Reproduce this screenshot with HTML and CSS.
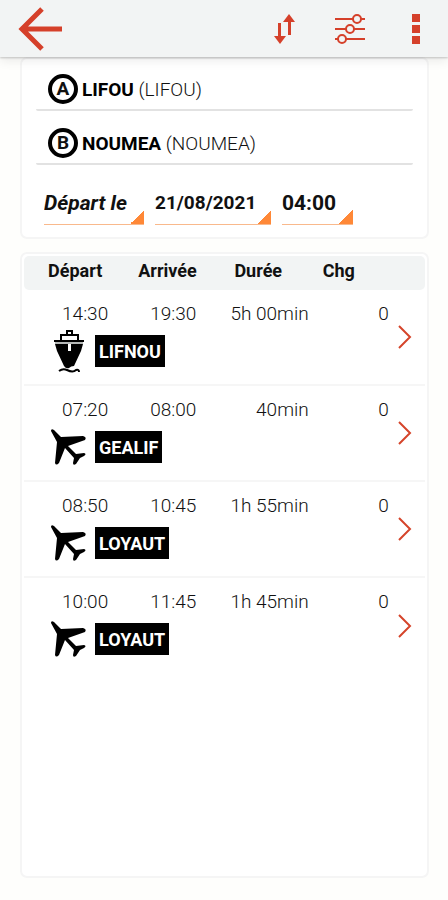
FILE: index.html
```html
<!DOCTYPE html>
<html lang="fr">
<head>
    <meta charset="UTF-8">
    <meta name="viewport" content="width=device-width, initial-scale=1.0">
    <title>Itinéraires</title>
    <link rel="stylesheet" href="styles.css">
</head>
<body>

    <svg class="sprite" aria-hidden="true">
        <symbol id="plane" viewBox="0 0 38 38">
            <path d="M1 3 Q1 0 4 2 L11 9 L33 8 Q37 9 35 12 L18 18 L26 26 L34 25 Q37 26 34 28 L30 30 L26 36 Q23 38 23 35 L24 30 L15 20 L9 35 Q6 38 5 35 L7 14 Z"/>
        </symbol>
        <symbol id="boat" viewBox="0 0 32 44">
            <path d="M14 5 V2 H19 V5 M8 11 V6 H25 V11" fill="none" stroke="#000" stroke-width="2"/>
            <path d="M1 11 H31 V13 H1 Z"/>
            <path d="M2 13 H30 V15 H2 Z" fill="#b5b8b7"/>
            <path d="M2 15 H15 V22 H18 V15 H30 L28 22 L21 37 Q18 37 16 39 Q13 40 11 37 L4 22 Z"/>
            <path d="M6 42 Q10 39 14 41 Q20 44 23 41 Q26 40 26 43" fill="none" stroke="#000" stroke-width="2"/>
        </symbol>
        <symbol id="chevron" viewBox="0 0 16 26">
            <path d="M2 2 L13 13 L2 24" fill="none" stroke="#d5442a" stroke-width="2"/>
        </symbol>
    </svg>

    <header class="topbar">
        <button type="button" class="icon-button back" aria-label="Retour">
            <svg width="46" height="46" viewBox="0 0 46 46" fill="none" stroke="#d5402a" stroke-width="5">
                <path d="M24 3 L4 23 L24 43 M4 23 H44"/>
            </svg>
        </button>
        <button type="button" class="icon-button" aria-label="Inverser">
            <svg width="24" height="32" viewBox="0 0 24 32" fill="#d5402a">
                <path d="M17 1 L23 9 H19 V22 H16 V9 H11 Z"/>
                <path d="M6 10 H9 V23 H14 L8 31 L2 23 H6 Z"/>
            </svg>
        </button>
        <button type="button" class="icon-button" aria-label="Options">
            <svg width="32" height="32" viewBox="0 0 32 32" fill="#f2f4f4" stroke="#d5402a" stroke-width="2">
                <path d="M1 6 H31 M1 16 H31 M1 26 H31"/>
                <circle cx="23" cy="6" r="4"/>
                <circle cx="16" cy="16" r="4"/>
                <circle cx="8" cy="26" r="4"/>
            </svg>
        </button>
        <button type="button" class="icon-button" aria-label="Menu">
            <svg width="8" height="32" viewBox="0 0 8 32" fill="#d5402a">
                <path d="M0 1 H8 V9 H0 Z M0 12 H8 V20 H0 Z M0 23 H8 V31 H0 Z"/>
            </svg>
        </button>
    </header>

    <form class="card search">
        <button type="button" class="place">
            <span class="pin">A</span>
            <span><b>LIFOU</b> (LIFOU)</span>
        </button>
        <button type="button" class="place">
            <span class="pin">B</span>
            <span><b>NOUMEA</b> (NOUMEA)</span>
        </button>
        <div class="when">
            <select class="picker mode" aria-label="Type d'horaire">
                <option>Départ le</option>
            </select>
            <input class="picker date" type="text" value="21/08/2021" aria-label="Date">
            <input class="picker time" type="text" value="04:00" aria-label="Heure">
        </div>
    </form>

    <main class="card results">
        <table class="journeys">
            <colgroup>
                <col class="col-dep">
                <col class="col-arr">
                <col class="col-dur">
                <col class="col-chg">
                <col class="col-more">
            </colgroup>
            <thead>
                <tr>
                    <th class="th-dep">Départ</th>
                    <th class="th-arr">Arrivée</th>
                    <th class="th-dur">Durée</th>
                    <th class="th-chg">Chg</th>
                    <td></td>
                </tr>
            </thead>
            <tbody>
                <tr class="times">
                    <td>14:30</td>
                    <td>19:30</td>
                    <td>5h 00min</td>
                    <td>0</td>
                    <td class="more" rowspan="2"><a href="#" aria-label="Détail"><svg width="16" height="26"><use href="#chevron"/></svg></a></td>
                </tr>
                <tr class="lines">
                    <td colspan="4">
                        <div class="line"><span class="vehicle"><svg width="32" height="44"><use href="#boat"/></svg></span><span class="badge">LIFNOU</span></div>
                    </td>
                </tr>
            </tbody>
            <tbody>
                <tr class="times">
                    <td>07:20</td>
                    <td>08:00</td>
                    <td>40min</td>
                    <td>0</td>
                    <td class="more" rowspan="2"><a href="#" aria-label="Détail"><svg width="16" height="26"><use href="#chevron"/></svg></a></td>
                </tr>
                <tr class="lines">
                    <td colspan="4">
                        <div class="line"><span class="vehicle"><svg width="38" height="38"><use href="#plane"/></svg></span><span class="badge">GEALIF</span></div>
                    </td>
                </tr>
            </tbody>
            <tbody>
                <tr class="times">
                    <td>08:50</td>
                    <td>10:45</td>
                    <td>1h 55min</td>
                    <td>0</td>
                    <td class="more" rowspan="2"><a href="#" aria-label="Détail"><svg width="16" height="26"><use href="#chevron"/></svg></a></td>
                </tr>
                <tr class="lines">
                    <td colspan="4">
                        <div class="line"><span class="vehicle"><svg width="38" height="38"><use href="#plane"/></svg></span><span class="badge">LOYAUT</span></div>
                    </td>
                </tr>
            </tbody>
            <tbody>
                <tr class="times">
                    <td>10:00</td>
                    <td>11:45</td>
                    <td>1h 45min</td>
                    <td>0</td>
                    <td class="more" rowspan="2"><a href="#" aria-label="Détail"><svg width="16" height="26"><use href="#chevron"/></svg></a></td>
                </tr>
                <tr class="lines">
                    <td colspan="4">
                        <div class="line"><span class="vehicle"><svg width="38" height="38"><use href="#plane"/></svg></span><span class="badge">LOYAUT</span></div>
                    </td>
                </tr>
            </tbody>
        </table>
    </main>

</body>
</html>
```
FILE: styles.css
```css
* {
    box-sizing: border-box;
}

body {
    font-family: Roboto, sans-serif;
    font-size: 18px;
    background-color: #fefefc;
    color: #111;
    margin: 0;
    min-height: 100vh;
    display: flex;
    flex-direction: column;
}

button, input, select {
    font-family: inherit;
    color: inherit;
    background: none;
    border: none;
    padding: 0;
    margin: 0;
}

svg {
    display: block;
}

.sprite {
    display: none;
}

/* top bar */
.topbar {
    display: flex;
    align-items: center;
    gap: 34px;
    height: 57px;
    padding: 0 16px 0 18px;
    background-color: #f2f4f4;
    box-shadow: 0 1px 2px rgba(0, 0, 0, 0.2), 0 4px 10px rgba(0, 0, 0, 0.08);
    z-index: 1;
}

.icon-button {
    display: flex;
    justify-content: center;
    min-width: 32px;
    cursor: pointer;
}

.back {
    margin-right: auto;
}

/* cards */
.card {
    margin: 0 19px 0 20px;
    background-color: #fff;
    border: 2px solid #f5f5f5;
    border-radius: 7px;
}

.search {
    padding: 10px 14px 12px;
}

.place {
    display: flex;
    align-items: center;
    gap: 4px;
    width: 100%;
    height: 42px;
    margin-bottom: 12px;
    padding: 0 12px;
    border-bottom: 2px solid #e2e2e2;
    border-radius: 2px;
    font-size: 19px;
    font-weight: 300;
}

.place b {
    font-weight: 700;
    color: #000;
}

.pin {
    width: 30px;
    height: 30px;
    border: 4px solid #000;
    border-radius: 50%;
    font-weight: 700;
    line-height: 22px;
}

.when {
    display: flex;
    gap: 11px;
    padding: 4px 8px 0;
}

.picker {
    appearance: none;
    height: 44px;
    border-bottom: 1px solid #f9b98c;
    border-radius: 0;
    font-weight: 700;
    background: linear-gradient(135deg, transparent 50%, #ff8837 50%) right bottom / 14px 14px no-repeat;
}

.mode {
    width: 100px;
    font-size: 21px;
    font-style: italic;
}

.date {
    width: 116px;
    font-size: 19px;
}

.time {
    width: 71px;
    font-size: 21px;
}

/* results */
.results {
    flex: 1;
    margin-top: 13px;
    margin-bottom: 22px;
    padding: 2px;
}

.journeys {
    width: 100%;
    table-layout: fixed;
    border-collapse: separate;
    border-spacing: 0;
}

.col-dep {
    width: 21%;
}

.col-arr {
    width: 22%;
}

.col-dur {
    width: 28%;
}

.col-chg {
    width: 20%;
}

.col-more {
    width: 9%;
}

.journeys td, .journeys th {
    padding: 0;
}

.journeys thead th, .journeys thead td {
    height: 34px;
    padding-bottom: 6px;
    background-color: #f2f4f4;
    text-align: left;
    font-weight: 700;
}

.journeys .th-dep {
    padding-left: 24px;
    border-radius: 5px 0 0 5px;
}

.journeys thead td {
    border-radius: 0 5px 5px 0;
}

.journeys .th-arr {
    padding-left: 30px;
}

.journeys .th-dur {
    padding-left: 38px;
}

.journeys .th-chg {
    padding-left: 14px;
}

.times td {
    height: 36px;
    padding-top: 11px;
    text-align: right;
    font-size: 19px;
    font-weight: 300;
    line-height: 24px;
}

.lines td {
    height: 60px;
    vertical-align: top;
}

.journeys tbody:not(:last-child) .lines td,
.journeys tbody:not(:last-child) .more {
    border-bottom: 2px solid #f6f6f6;
}

.journeys .more {
    padding: 0 0 0 8px;
    vertical-align: middle;
}

.line {
    display: flex;
    align-items: center;
    gap: 7px;
    height: 50px;
    padding-left: 26px;
}

.vehicle {
    display: flex;
    justify-content: center;
    width: 38px;
}

.badge {
    height: 32px;
    padding: 0 4px;
    background-color: #000;
    color: #fff;
    font-size: 18px;
    font-weight: 700;
    line-height: 33px;
}
```
